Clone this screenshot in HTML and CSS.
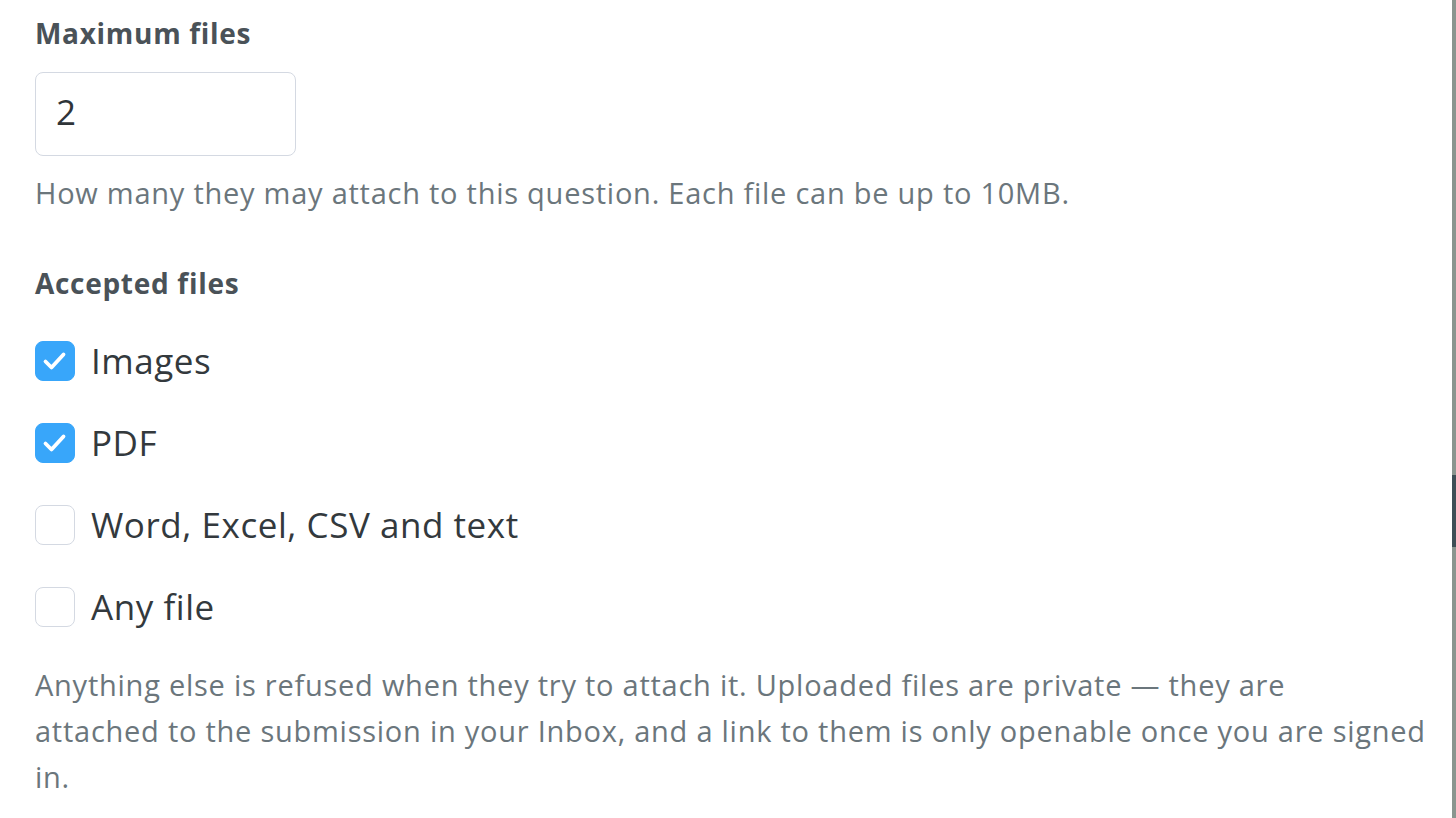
FILE: index.html
```html
<!DOCTYPE html>
<html lang="en">
<head>
<meta charset="utf-8">
<title>File upload settings</title>
<link rel="stylesheet" href="styles.css">
</head>
<body>
<div class="page">
  <main class="form">
    <section class="field">
      <label class="field-label" for="max-files">Maximum files</label>
      <input class="text-input" id="max-files" type="text" value="2">
      <p class="help">How many they may attach to this question. Each file can be up to 10MB.</p>
    </section>
    <section class="field field-accepted">
      <div class="field-label">Accepted files</div>
      <ul class="options">
        <li class="option">
          <span class="checkbox checked"><svg viewBox="0 0 40 40" width="40" height="40"><path d="M10.5 20.5 L16.5 26.5 L28.5 13.5" fill="none" stroke="#fff" stroke-width="3.8" stroke-linecap="round" stroke-linejoin="round"/></svg></span>
          <span class="option-label">Images</span>
        </li>
        <li class="option">
          <span class="checkbox checked"><svg viewBox="0 0 40 40" width="40" height="40"><path d="M10.5 20.5 L16.5 26.5 L28.5 13.5" fill="none" stroke="#fff" stroke-width="3.8" stroke-linecap="round" stroke-linejoin="round"/></svg></span>
          <span class="option-label">PDF</span>
        </li>
        <li class="option">
          <span class="checkbox"></span>
          <span class="option-label">Word, Excel, CSV and text</span>
        </li>
        <li class="option">
          <span class="checkbox"></span>
          <span class="option-label">Any file</span>
        </li>
      </ul>
      <p class="help help-long">Anything else is refused when they try to attach it. Uploaded files are private — they are attached&nbsp;to the submission in your Inbox, and a link to them is only openable once you are signed in.</p>
    </section>
  </main>
  <aside class="edge">
    <div class="edge-top"></div>
    <div class="edge-handle"></div>
    <div class="edge-bottom"></div>
  </aside>
</div>
</body>
</html>
```

FILE: styles.css
```css
* { box-sizing: border-box; }
html, body {
  margin: 0;
  padding: 0;
  background: #ffffff;
  height: 100%;
}
body {
  font-family: "Open Sans", "Noto Sans", "Liberation Sans", sans-serif;
  font-variant-ligatures: none;
  color: #33393d;
  overflow: hidden;
}
.page {
  display: flex;
  height: 818px;
}
.form {
  flex: 1;
  padding: 13px 22px 0 35px;
}
.field {
  display: flex;
  flex-direction: column;
  align-items: flex-start;
}
.field-label {
  font-size: 28px;
  font-weight: 700;
  letter-spacing: 0.7px;
  line-height: 40px;
  color: #4a5258;
}
.text-input {
  margin-top: 19px;
  width: 261px;
  height: 84px;
  border: 1.5px solid #d4d9e2;
  border-radius: 8px;
  padding: 0 20px 5px;
  font-family: inherit;
  font-size: 35px;
  color: #2f3539;
  background: #fff;
  outline: none;
}
.help {
  margin: 17px 0 0;
  font-size: 29px;
  letter-spacing: 0.75px;
  line-height: 40px;
  color: #6b767c;
}
.field-accepted {
  margin-top: 50px;
}
.options {
  list-style: none;
  margin: 38px 0 0;
  padding: 0;
  display: flex;
  flex-direction: column;
  gap: 42px;
}
.option {
  display: flex;
  align-items: center;
  gap: 16px;
  height: 40px;
}
.checkbox {
  width: 40px;
  height: 40px;
  border-radius: 8px;
  border: 1.5px solid #d4d9e2;
  background: #fff;
  display: flex;
  flex: none;
}
.checkbox.checked {
  background: #38a6fa;
  border-color: #38a6fa;
}
.checkbox svg {
  margin: -1.5px;
}
.option-label {
  font-size: 35px;
  letter-spacing: 0.55px;
  line-height: 40px;
  color: #33393d;
}
.help-long {
  margin-top: 35px;
  line-height: 46px;
}
.edge {
  width: 4px;
  flex: none;
  display: flex;
  flex-direction: column;
  background: #8a958f;
}
.edge-top { height: 475px; }
.edge-handle { height: 72px; background: #3e4f56; }
.edge-bottom { flex: 1; }
```
